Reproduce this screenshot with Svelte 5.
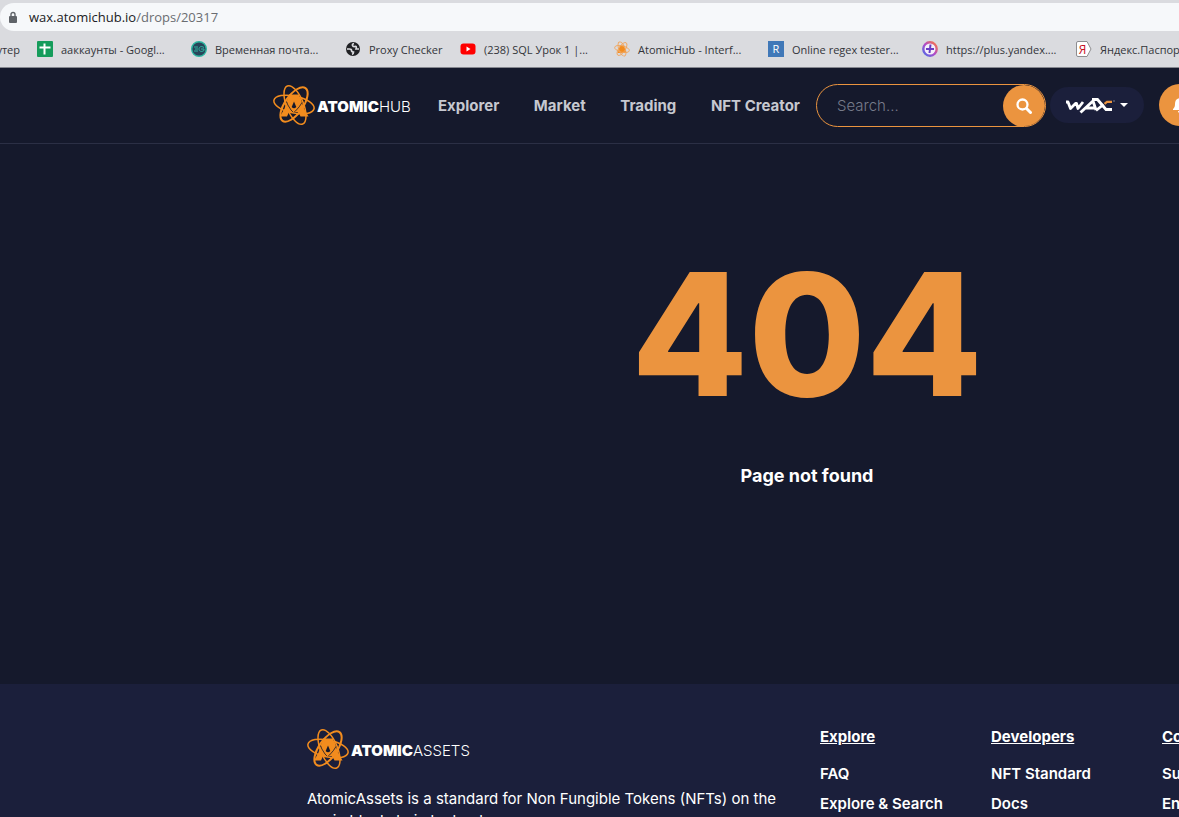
<script>
  const bookmarks = [
    { icon: 'sheet', label: 'ааккаунты - Googl...' },
    { icon: 'mail', label: 'Временная почта...' },
    { icon: 'globe', label: 'Proxy Checker', short: true },
    { icon: 'video', label: '(238) SQL Урок 1 |...' },
    { icon: 'atom', label: 'AtomicHub - Interf...' },
    { icon: 'regex', label: 'Online regex tester...' },
    { icon: 'plus', label: 'https://plus.yandex....' },
    { icon: 'ya', label: 'Яндекс.Паспорт' }
  ];
  const nav = ['Explorer', 'Market', 'Trading', 'NFT Creator'];
  const columns = [
    { title: 'Explore', links: ['FAQ', 'Explore & Search'] },
    { title: 'Developers', links: ['NFT Standard', 'Docs'] },
    { title: 'Community', links: ['Support', 'English'] }
  ];
</script>

{#snippet atom()}
  <svg width="42" height="42" viewBox="0 0 42 42" fill="none" stroke="#f28c1e" stroke-width="1.5" aria-hidden="true">
    <path d="M16 10.500h10v3h1.500l3.500 11 4.500 8h-8l-2-4.500H16l-2 4.500H7l4.500-8 3.500-11h1z" fill="#f28c1e" stroke="none" />
    <path d="M21 17.500l2.300 5.500q-2.300 2.500-4.600 0z" fill="#15192c" stroke="none" />
    <path d="M12.500 15q4 13 14 18M31 14q-3 9-13 17" stroke="#15192c" stroke-width=".8" />
    <ellipse cx="21" cy="20.500" rx="20.500" ry="8.500" transform="rotate(12 21 20.500)" />
    <ellipse cx="22" cy="21" rx="20.500" ry="8.500" transform="rotate(68 22 21)" />
    <ellipse cx="21" cy="20.500" rx="20" ry="9" transform="rotate(125 21 20.500)" stroke-width="2" />
  </svg>
{/snippet}

<div class="page">
  <div class="address">
    <div class="url">
      <svg width="10" height="13" viewBox="0 0 10 13" aria-hidden="true">
        <rect x="1" y="5" width="8" height="7" rx="1" fill="#5f6368" />
        <path d="M3 5V3.500a2 2 0 0 1 4 0V5" fill="none" stroke="#5f6368" stroke-width="1.400" />
      </svg>
      <span><b>wax.atomichub.io</b>/drops/20317</span>
    </div>
  </div>
  <nav class="bookmarks" aria-label="Bookmarks">
    <a class="first" href="#top">утер</a>
    {#each bookmarks as b}
      <a href="#top" class:short={b.short}>
        <svg width="16" height="16" viewBox="0 0 16 16" aria-hidden="true">
          {#if b.icon === 'sheet'}
            <rect width="16" height="16" rx="1" fill="#159c5b" />
            <path d="M2.500 6.500h11M7.500 2.500v11" stroke="#fff" stroke-width="2" />
          {:else if b.icon === 'mail'}
            <circle cx="8" cy="8" r="7.300" fill="#28455a" stroke="#2cb5a0" stroke-width="1.400" />
            <path d="M3 6h4M4 8h3M3 10h4M13 6.500c-3-2-5-.5-5 1.500s2 3.500 5 1.500V8h-3" fill="none" stroke="#2cb5a0" />
          {:else if b.icon === 'globe'}
            <circle cx="8" cy="8" r="7" fill="#202124" />
            <path d="M2 8h2.500q2 0 2 1.500t2 1.500q0 2-1.500 2.500" fill="none" stroke="#dadbdf" stroke-width="1.700" />
            <path d="M9 2.500q-2 .5-1.500 2t2.500 1 1 2.500h3" fill="none" stroke="#dadbdf" stroke-width="1.700" />
          {:else if b.icon === 'video'}
            <rect x=".5" y="2.500" width="15" height="11" rx="3" fill="#f00" />
            <path d="M6.500 5.500l4 2.500-4 2.500z" fill="#fff" />
          {:else if b.icon === 'atom'}
            <g fill="none" stroke="#f0a65f" stroke-width=".9">
              <path d="M6 4.500h4l2.500 7.500h-9z" fill="#f28c1e" stroke="none" />
              <ellipse cx="8" cy="8" rx="7.500" ry="3.200" transform="rotate(14 8 8)" />
              <ellipse cx="8" cy="8" rx="7.500" ry="3.200" transform="rotate(69 8 8)" />
              <ellipse cx="8" cy="8" rx="7.500" ry="3.200" transform="rotate(124 8 8)" />
            </g>
          {:else if b.icon === 'regex'}
            <rect width="16" height="16" fill="#4078b8" />
            <text x="8" y="12" text-anchor="middle" font-size="11" fill="#fff">R</text>
          {:else if b.icon === 'plus'}
            <defs>
              <linearGradient id="ring" x1="1" y1="0" x2="0" y2="1">
                <stop offset="0" stop-color="#ff7a3d" />
                <stop offset=".5" stop-color="#b24bc8" />
                <stop offset="1" stop-color="#4a6be8" />
              </linearGradient>
            </defs>
            <circle cx="8" cy="8" r="6.700" fill="#f4f0fa" stroke="url(#ring)" stroke-width="2.400" />
            <path d="M8.500 3.500L7.500 12M4 8h8" stroke="#6a3cc4" stroke-width="2" />
          {:else}
            <path d="M.5 2Q.5.5 2 .5h9l4 7.500-4 7.500H2Q.5 15.500.5 14z" fill="#fff" stroke="#8d8d90" />
            <text x="6.500" y="12.500" text-anchor="middle" font-size="12" fill="#c8101e">Я</text>
          {/if}
        </svg>
        <span>{b.label}</span>
      </a>
    {/each}
  </nav>

  <div class="site">
    <header>
      <a class="logo" href="#top">{@render atom()}<span><b>ATOMIC</b>HUB</span></a>
      <nav class="menu" aria-label="Main">
        {#each nav as item}<a href="#top">{item}</a>{/each}
      </nav>
      <form class="search">
        <input type="search" placeholder="Search..." aria-label="Search" />
        <button type="button" aria-label="Submit search">
          <svg width="16" height="16" viewBox="0 0 16 16" fill="none" stroke="#fff" aria-hidden="true">
            <circle cx="6.500" cy="6.500" r="5" stroke-width="2.300" />
            <path d="M10.500 10.500l4 4" stroke-width="3" stroke-linecap="round" />
          </svg>
        </button>
      </form>
      <button class="chain" type="button" aria-label="WAX">
        <svg width="50" height="18" viewBox="0 0 50 18" fill="none" stroke="#fff" stroke-width="2.800" aria-hidden="true">
          <path d="M0 6h2l2.500 6.500 5-5h1l1.500 5 5-6.500" stroke-linejoin="round" />
          <path d="M14.500 16.500L27 5l3 9M20 12h9" />
          <path d="M26 3.500h5.500L40 13.500h6" />
          <path d="M30 14.500l7.500-6" />
          <path d="M38.500 7.800l2.500-2h5" stroke="#eb943f" stroke-width="2.200" />
          <path d="M47 5h2" stroke="#777b8a" stroke-width="1" />
        </svg>
        <svg width="8" height="4" viewBox="0 0 8 4" aria-hidden="true"><path d="M0 0h8L4 4z" fill="#fff" /></svg>
      </button>
      <button class="bell" type="button" aria-label="Notifications">
        <svg width="16" height="16" viewBox="0 0 16 16" fill="#fff" aria-hidden="true">
          <path d="M8 0a1 1 0 0 1 1 1.200C12 2 13 4 13 7c0 3 1 4 2 5v1H1v-1c1-1 2-2 2-5 0-3 1-5 4-5.800A1 1 0 0 1 8 0zM6 14h4a2 2 0 0 1-4 0z" />
        </svg>
      </button>
    </header>

    <main>
      <h1>404</h1>
      <p>Page not found</p>
    </main>

    <footer>
      <section class="about">
        <a class="logo" href="#top">{@render atom()}<span><b>ATOMIC</b>ASSETS</span></a>
        <p>AtomicAssets is a standard for Non Fungible Tokens (NFTs) on the eosio blockchain technology.</p>
      </section>
      {#each columns as c}
        <section class="column">
          <h2>{c.title}</h2>
          {#each c.links as l}<a href="#top">{l}</a>{/each}
        </section>
      {/each}
    </footer>
  </div>
</div>

<style>
  :global(body) {
    overflow: hidden;
    background: #15192c;
  }
  .page {
    height: 100vh;
    overflow: hidden;
    font-family: Inter, sans-serif;
    color: #fff;
  }
  a {
    color: inherit;
    text-decoration: none;
  }
  button {
    border: 0;
    padding: 0;
    display: flex;
    align-items: center;
    justify-content: center;
    flex: none;
  }
  svg {
    flex: none;
  }
  .address {
    background: #dadbdf;
    padding-top: 3px;
    font: 13px/28px "Open Sans", sans-serif;
  }
  .url {
    display: flex;
    align-items: center;
    gap: 11px;
    padding-left: 8px;
    height: 28px;
    border-radius: 14px 0 0 14px;
    background: #f6f8fa;
    color: #6a6d71;
  }
  .url b {
    font-weight: 400;
    color: #202124;
  }
  .bookmarks {
    display: flex;
    height: 36px;
    background: #dadbdf;
    border-bottom: 1px solid #85878f;
    color: #33353a;
    font: 11px "Open Sans", sans-serif;
    overflow: hidden;
  }
  .bookmarks a {
    display: flex;
    flex: none;
    align-items: center;
    gap: 8px;
    width: 154px;
    white-space: nowrap;
  }
  .bookmarks a.short {
    width: 115px;
  }
  .bookmarks a.first {
    width: 20px;
    margin-right: 17px;
    justify-content: flex-end;
  }
  .site {
    min-width: 1614px;
  }
  header {
    display: flex;
    align-items: center;
    height: 74px;
    padding: 0 273px 1px;
    border-bottom: 1px solid #2b2f45;
  }
  .logo {
    display: flex;
    align-items: center;
    gap: 2px;
    font-size: 15px;
    font-weight: 300;
  }
  .logo b {
    font-weight: 900;
  }
  .logo span {
    padding-top: 2px;
  }
  header .logo {
    width: 149px;
  }
  .menu {
    display: flex;
    flex: none;
    justify-content: space-between;
    width: 394px;
    font-size: 15px;
    font-weight: 700;
    color: #c6c8d0;
  }
  .menu a {
    padding: 0 16px;
    white-space: nowrap;
  }
  .search {
    display: flex;
    flex: none;
    box-sizing: border-box;
    width: 230px;
    height: 43px;
    border: 1px solid #eb943f;
    border-radius: 22px;
    overflow: hidden;
  }
  .search input {
    flex: 1;
    min-width: 0;
    padding: 0 20px;
    border: 0;
    background: none;
    color: #fff;
    font: 300 15px Inter, sans-serif;
  }
  .search input::placeholder {
    color: #777b8a;
  }
  .search button,
  .bell {
    width: 42px;
    height: 42px;
    border-radius: 50%;
    background: #eb943f;
  }
  .chain {
    gap: 4px;
    width: 94px;
    height: 36px;
    margin: 0 15px 0 4px;
    border-radius: 18px;
    background: #1b1f3b;
  }
  main {
    height: 540px;
    text-align: center;
  }
  h1 {
    margin: 0;
    padding-top: 84px;
    font-size: 170px;
    font-weight: 800;
    line-height: 212px;
    color: #eb943f;
  }
  main p {
    margin: 24px 0 0;
    font-size: 18px;
    font-weight: 700;
    line-height: 24px;
  }
  footer {
    display: flex;
    min-height: 300px;
    padding: 44px 307px 0;
    background: #1b1f3b;
    font-size: 15px;
  }
  .about {
    flex: none;
    width: 513px;
  }
  .about p {
    margin: 18px 24px 0 0;
    line-height: 22px;
  }
  .column {
    display: flex;
    flex: none;
    flex-direction: column;
    width: 171px;
    font-weight: 600;
    line-height: 18px;
  }
  .column h2 {
    margin: 0 0 19px;
    font-size: 15px;
    font-weight: 700;
    text-decoration: underline;
  }
  .column a {
    margin-bottom: 12px;
  }
</style>
